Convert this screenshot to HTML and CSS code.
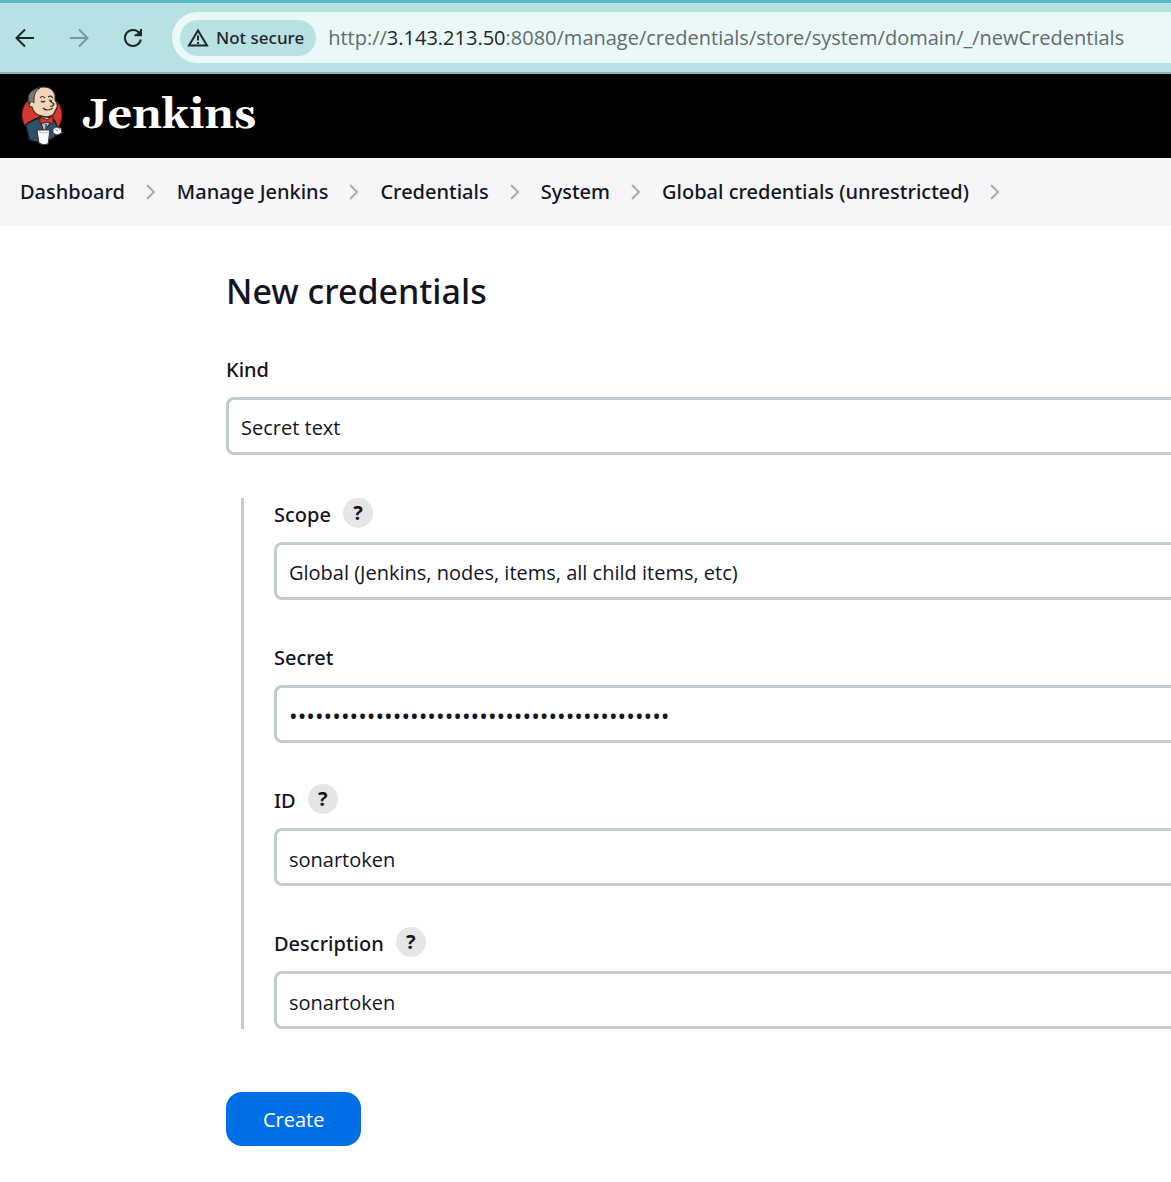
FILE: index.html
```html
<!DOCTYPE html>
<html lang="en">
<head>
<meta charset="utf-8">
<meta name="viewport" content="width=device-width, initial-scale=1">
<title>New credentials [Jenkins]</title>
<link rel="stylesheet" href="styles.css">
</head>
<body>
<div class="toolbar">
  <button class="nav-button" type="button" aria-label="Back">
    <svg viewBox="0 0 20 20" width="20" height="20"><path d="M19 10H2M10 1.500L1.500 10L10 18.500"/></svg>
  </button>
  <button class="nav-button nav-disabled" type="button" aria-label="Forward" disabled>
    <svg viewBox="0 0 20 20" width="20" height="20"><path d="M1 10H18M10 1.500L18.500 10L10 18.500"/></svg>
  </button>
  <button class="nav-button" type="button" aria-label="Reload">
    <svg viewBox="0 0 20 20" width="20" height="20"><path d="M17.800 11.500A8 8 0 1 1 16 4.700L17 6"/><path d="M18 1V7.200H11.500M14.500 6.500H17.500V3.500Z"/></svg>
  </button>
  <div class="address">
    <button class="security" type="button">
      <svg viewBox="0 0 22 20" width="22" height="20"><path d="M11 2.500L20 17.500H2Z"/><path d="M11 7.500V12.500M11 14V16"/></svg>
      Not secure
    </button>
    <span class="url">http://<span class="host">3.143.213.50</span>:8080/manage/credentials/store/system/domain/_/newCredentials</span>
  </div>
</div>

<header class="header">
  <a class="brand" href="#">
    <svg class="mascot" viewBox="0 0 44 60" width="44" height="60" aria-hidden="true">
      <circle cx="22" cy="29" r="20" fill="#d33833" stroke="#7d1c19"/>
      <path d="M9 54C9 49 6 44 6 39C9 35 15 34 20 31L34 34C38 39 37 46 35 51L28 55L16 56Z" fill="#2e5265" stroke="#121a20" stroke-width="1.500"/>
      <path d="M19 31L24 46L32 34L28 31Z" fill="#a8c4d2" stroke="#222"/>
      <path d="M10 17C7 8 14 1 24 1C33 1 36 8 35 14C38 18 38 22 35 25C34 30 28 32 22 30C17 29 13 26 12 21C9 21 8 19 10 17Z" fill="#f0d6b7" stroke="#33251e" stroke-width="1.200"/>
      <path d="M9 18C6 9 11 3 20 2C14 6 14 10 14 17C12 15 10 15 9 18Z" fill="#77787a" stroke="#34312f"/>
      <path d="M20 12Q22 9 25 12M28 11Q31 9 33 12M21 15Q23 17 25 15M29 14L32 15M30 15L34 18Q33 21 30 20M23 22Q27 26 33 22" fill="none" stroke="#3d2923" stroke-width="1.200"/>
      <path d="M20 31L27 34L33 30V38L27 36L20 38Z" fill="#d33833" stroke="#63110f"/>
      <path d="M26 38V44" stroke="#345" stroke-width="1.500"/>
      <path d="M17 44L30 44L28 58Q23 60 19 57Z" fill="#fff" stroke="#333"/>
      <path d="M19 46Q24 48 29 46" fill="none" stroke="#bbb"/>
      <path d="M33 43L36 41L41 42L42 47L37 49L33 47Z" fill="#fff" stroke="#444"/>
      <path d="M35 43L38 45M38 42L40 44" stroke="#888"/>
    </svg>
    <span>Jenkins</span>
  </a>
</header>

<nav class="breadcrumbs" aria-label="Breadcrumbs">
  <a href="#">Dashboard</a>
  <svg viewBox="0 0 10 18" width="10" height="18"><path d="M1 2L8 9L1 16"/></svg>
  <a href="#">Manage Jenkins</a>
  <svg viewBox="0 0 10 18" width="10" height="18"><path d="M1 2L8 9L1 16"/></svg>
  <a href="#">Credentials</a>
  <svg viewBox="0 0 10 18" width="10" height="18"><path d="M1 2L8 9L1 16"/></svg>
  <a href="#">System</a>
  <svg viewBox="0 0 10 18" width="10" height="18"><path d="M1 2L8 9L1 16"/></svg>
  <a href="#">Global credentials (unrestricted)</a>
  <svg viewBox="0 0 10 18" width="10" height="18"><path d="M1 2L8 9L1 16"/></svg>
</nav>

<main class="main">
  <h1>New credentials</h1>
  <form>
    <div class="field">
      <div class="label-row"><label for="kind">Kind</label></div>
      <select class="control" id="kind"><option>Secret text</option></select>
    </div>
    <div class="nested">
      <div class="field">
        <div class="label-row"><label for="scope">Scope</label><button class="help" type="button" aria-label="Help for Scope">?</button></div>
        <select class="control" id="scope"><option>Global (Jenkins, nodes, items, all child items, etc)</option></select>
      </div>
      <div class="field">
        <div class="label-row"><label for="secret">Secret</label></div>
        <input class="control secret" id="secret" type="password" value="abcdefghijklmnopqrstuvwxyzabcdefghijklmnopqr">
      </div>
      <div class="field">
        <div class="label-row"><label for="cred-id">ID</label><button class="help" type="button" aria-label="Help for ID">?</button></div>
        <input class="control" id="cred-id" type="text" value="sonartoken">
      </div>
      <div class="field">
        <div class="label-row"><label for="description">Description</label><button class="help" type="button" aria-label="Help for Description">?</button></div>
        <input class="control" id="description" type="text" value="sonartoken">
      </div>
    </div>
    <button class="create" type="submit">Create</button>
  </form>
</main>
</body>
</html>
```
FILE: styles.css
```css
* {
  box-sizing: border-box;
}

body {
  margin: 0;
  background: #fff;
  color: #14141f;
  font-family: "Open Sans", "Noto Sans", sans-serif;
  font-size: 20px;
  line-height: 28px;
}

button,
input,
select {
  font: inherit;
  color: inherit;
}

button {
  border: 0;
  padding: 0;
  cursor: pointer;
}

a {
  color: inherit;
  text-decoration: none;
}

/* Medium-weight text: Noto Sans carries a 500 weight */
.security,
.breadcrumbs,
.label-row,
h1 {
  font-family: "Noto Sans", "Open Sans", sans-serif;
  font-weight: 500;
}

/* Browser toolbar */
.toolbar {
  display: flex;
  align-items: center;
  gap: 34px;
  height: 74px;
  padding-left: 15px;
  background: #b8e1e4;
  border-top: 3px solid #5bb9c1;
  border-bottom: 2px solid #8fb3b5;
}

.nav-button {
  display: flex;
  flex: none;
  background: none;
}

.nav-button svg,
.security svg {
  fill: none;
  stroke: #1f2528;
  stroke-width: 2;
}

.nav-disabled svg {
  stroke: #7a9597;
}

.address {
  display: flex;
  flex: 1;
  align-items: center;
  gap: 12px;
  min-width: 0;
  height: 51px;
  margin-left: -5px;
  padding-left: 8px;
  border-radius: 26px 0 0 26px;
  background: #ebf8f8;
}

.security {
  display: flex;
  flex: none;
  align-items: center;
  gap: 7px;
  height: 36px;
  padding: 0 12px 0 7px;
  border-radius: 18px;
  background: #b8e1e4;
  color: #1f2528;
  font-size: 17px;
}

.url {
  overflow: hidden;
  color: #646b6d;
  white-space: nowrap;
}

.host {
  color: #1f2528;
}

/* Site header */
.header {
  display: flex;
  align-items: center;
  height: 84px;
  padding-left: 20px;
  background: #000;
}

.brand {
  display: flex;
  align-items: center;
  gap: 18px;
  color: #fff;
  font: bold 43px/60px Gelasio, Georgia, "DejaVu Serif", serif;
}

.breadcrumbs {
  display: flex;
  align-items: center;
  gap: 21px;
  height: 68px;
  padding-left: 20px;
  background: #f6f6f9;
  white-space: nowrap;
}

.breadcrumbs svg {
  flex: none;
  fill: none;
  stroke: #a9a9b8;
  stroke-width: 2;
}

/* Form */
.main {
  padding: 40px 0 36px 226px;
}

h1 {
  margin: 0 0 37px;
  font-size: 34px;
  line-height: 50px;
}

.label-row {
  display: flex;
  align-items: center;
  gap: 12px;
  height: 30px;
  margin-bottom: 14px;
}

.label-row label {
  padding-top: 4px;
}

.help {
  width: 30px;
  height: 30px;
  border-radius: 50%;
  background: #e6e6e6;
  font-weight: 700;
}

.control {
  display: block;
  width: 100%;
  height: 58px;
  margin: 0;
  padding: 4px 12px 0;
  appearance: none;
  border: 3px solid #c3ccd1;
  border-right: 0;
  border-radius: 8px 0 0 8px;
  outline: 0;
  background: #fff;
}

.secret {
  font-size: 23px;
}

.nested {
  display: grid;
  gap: 41px;
  margin: 43px 0 63px 15px;
  padding-left: 30px;
  border-left: 3px solid #c3ccd1;
}

.create {
  height: 54px;
  padding: 2px 37px 0;
  border-radius: 16px;
  background: #006fe6;
  color: #fff;
}
```
